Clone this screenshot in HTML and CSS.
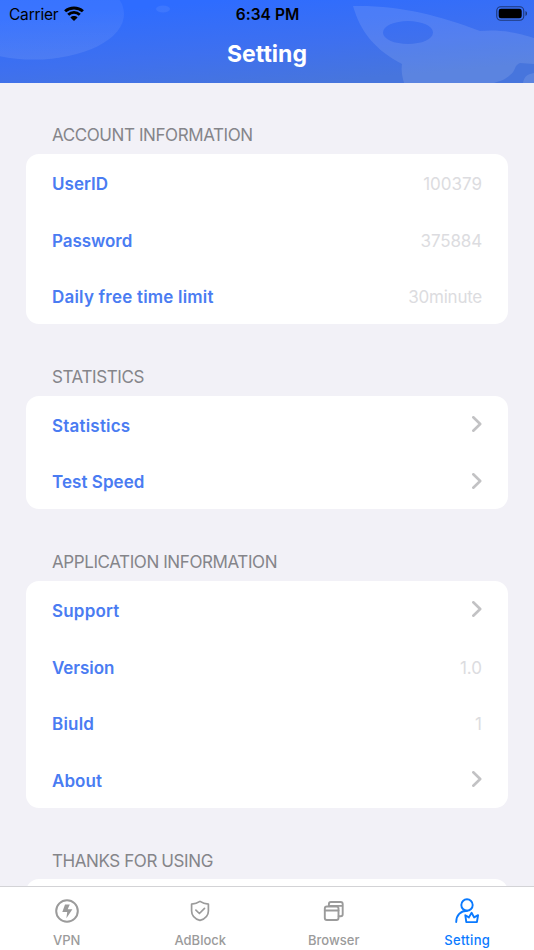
FILE: index.html
```html
<!DOCTYPE html>
<html lang="en">
<head>
<meta charset="utf-8">
<title>Setting</title>
<link rel="stylesheet" href="styles.css">
</head>
<body>
<div class="screen">
  <header class="top">
    <svg class="art" viewBox="0 0 534 83" aria-hidden="true">
      <defs>
        <linearGradient id="glow" x1="0" y1="0" x2="0" y2="1">
          <stop offset="0" stop-color="#fff" stop-opacity=".03"/>
          <stop offset="1" stop-color="#fff" stop-opacity=".09"/>
        </linearGradient>
      </defs>
      <ellipse cx="34" cy="14" rx="90" ry="45.5" fill="url(#glow)"/>
      <ellipse cx="163" cy="9" rx="7" ry="3.5" fill="#fff" opacity=".07"/>
      <path fill="#fff" fill-opacity=".11" fill-rule="evenodd" d="M353 6C399 5 438 15 480 31C501 29 520 33 534 38V64L520 63C514 65 516 71 510 75C505 80 500 81 494 83H404C402 76 401 70 402 64C375 50 360 31 353 6ZM383 32.500a25 11.500 0 1 0 50 0a25 11.500 0 1 0-50 0Z"/>
      <path fill="#fff" fill-opacity=".11" d="M523 83C524 76 528 74 534 73V83Z"/>
    </svg>
    <div class="status">
      <div class="carrier"><span>Carrier</span>
        <svg class="wifi" viewBox="0 0 20 15"><path d="M1.100 5.300C6 .8 14 .8 18.900 5.300M4.200 8.700c3.300-3.100 8.300-3.100 11.600 0" fill="none" stroke="#000" stroke-width="2.900"/><path d="M6.400 11.400c2-1.900 5.200-1.900 7.200 0L10 15Z"/></svg>
      </div>
      <div class="clock">6:34 PM</div>
      <svg class="battery" viewBox="0 0 32 15"><rect x=".75" y=".75" width="27" height="13.500" rx="4" fill="none" stroke="#000" stroke-opacity=".5" stroke-width="1.100"/><rect x="2.700" y="2.700" width="23" height="9.600" rx="2.300"/><path d="M29.500 5v5c2-.8 2-4.200 0-5Z" opacity=".55"/></svg>
    </div>
    <h1 class="title">Setting</h1>
  </header>
  <main class="content">
    <section class="group">
      <h2 class="heading">ACCOUNT INFORMATION</h2>
      <div class="card">
        <div class="row"><span class="label">UserID</span><span class="value">100379</span></div>
        <div class="row"><span class="label snug">Password</span><span class="value snug">375884</span></div>
        <div class="row"><span class="label loose">Daily free time limit</span><span class="value tight">30minute</span></div>
      </div>
    </section>
    <section class="group">
      <h2 class="heading">STATISTICS</h2>
      <div class="card">
        <div class="row"><span class="label loose">Statistics</span><svg class="chevron" viewBox="0 0 10 16"><path d="M1.300 1.300 8.200 8l-6.900 6.700"/></svg></div>
        <div class="row"><span class="label">Test Speed</span><svg class="chevron" viewBox="0 0 10 16"><path d="M1.300 1.300 8.200 8l-6.900 6.700"/></svg></div>
      </div>
    </section>
    <section class="group">
      <h2 class="heading">APPLICATION INFORMATION</h2>
      <div class="card">
        <div class="row"><span class="label loose">Support</span><svg class="chevron" viewBox="0 0 10 16"><path d="M1.300 1.300 8.200 8l-6.900 6.700"/></svg></div>
        <div class="row"><span class="label snug">Version</span><span class="value">1.0</span></div>
        <div class="row"><span class="label loose">Biuld</span><span class="value">1</span></div>
        <div class="row"><span class="label">About</span><svg class="chevron" viewBox="0 0 10 16"><path d="M1.300 1.300 8.200 8l-6.900 6.700"/></svg></div>
      </div>
    </section>
    <section class="group">
      <h2 class="heading">THANKS FOR USING</h2>
      <div class="card"><div class="row"></div></div>
    </section>
  </main>
  <nav class="tabs">
    <a class="tab">
      <svg class="icon" viewBox="0 0 28 28"><circle cx="14" cy="14" r="10.800" stroke-width="2"/><path class="solid" d="M12 7.500h4.800l-2.100 4.800h4.700l-6 8.900.8-6.200H9.300Z"/></svg>
      <span>VPN</span>
    </a>
    <a class="tab">
      <svg class="icon" viewBox="0 0 28 28"><path stroke-width="1.700" d="M14 4.400c2.500 1.700 5.400 2.600 8.400 2.800v6.700c0 4.400-3.200 7.800-8.400 9.500-5.200-1.700-8.400-5.100-8.400-9.500V7.200c3-.2 5.900-1.100 8.400-2.800ZM9.900 13.200l3.500 3.300 5.100-5.100"/></svg>
      <span>AdBlock</span>
    </a>
    <a class="tab">
      <svg class="icon" viewBox="0 0 28 28"><rect x="4.800" y="9.500" width="13.700" height="13.500" rx="2" stroke-width="1.900"/><path stroke-width="1.900" d="M4.800 13.500h13.700M8.900 9V7a2 2 0 0 1 2-2h9.800a2 2 0 0 1 2 2v10.300a2 2 0 0 1-2 2h-2M9 8.900h13.500"/></svg>
      <span>Browser</span>
    </a>
    <a class="tab active">
      <svg class="icon" viewBox="0 0 28 28"><circle cx="14" cy="8" r="5.700" stroke-width="1.900"/><path stroke-width="1.900" d="M3.200 25C3.200 18.500 7.600 13.800 14 13.800M12.300 18.200l3.600 2.200 2.700-4.700 2.500 4.700 4-2.200-1.200 6.900H13.300Z"/></svg>
      <span>Setting</span>
    </a>
  </nav>
</div>
</body>
</html>
```
FILE: styles.css
```css
* { box-sizing: border-box; }
body { margin: 0; font-family: Inter, "Liberation Sans", sans-serif; background: #f2f1f7; }
h1, h2 { margin: 0; }
.screen { height: 950px; display: flex; flex-direction: column; overflow: hidden; }
.top {
  position: relative; flex: none; height: 83px;
  background: linear-gradient(175deg, #2e6cff 15%, #3e70ef 55%, #4775dd 85%);
}
.art { position: absolute; inset: 0; width: 534px; height: 83px; }
.status {
  position: relative; height: 27px; padding: 1px 8px 0 9px;
  display: grid; grid-template-columns: 1fr auto 1fr; align-items: center;
  color: #000; font-size: 15.5px;
}
.carrier { display: flex; align-items: center; gap: 6px; letter-spacing: -.2px; }
.wifi { width: 20px; height: 15px; margin-top: -2px; }
.clock { font-weight: 600; letter-spacing: .05px; }
.battery { justify-self: end; width: 32px; height: 15px; margin: -2px -2px 0 0; }
.title {
  position: relative; height: 54px; text-align: center;
  color: #fff; font-size: 23px; line-height: 54px; font-weight: 700;
}
.content { flex: 1; min-height: 0; overflow: hidden; padding: 0 26px; }
.heading {
  height: 71.700px; padding: 42.800px 26px 0; color: #85858a;
  font-size: 17px; line-height: 20px; font-weight: 400; letter-spacing: -.41px;
}
.group:first-child .heading { height: 71.200px; padding-top: 42px; }
.card { border-radius: 13px; background: #fff; }
.row {
  height: 56.700px; padding: 3px 26px 0;
  display: flex; align-items: center; justify-content: space-between;
}
.label { color: #4a7cf2; font-size: 17px; font-weight: 600; letter-spacing: .05px; }
.label.loose { letter-spacing: .2px; }
.label.snug { letter-spacing: -.05px; }
.value { color: #dcdce0; font-size: 17px; }
.value.snug { letter-spacing: -.15px; }
.value.tight { letter-spacing: -.25px; }
.chevron { width: 10px; height: 16px; margin-top: -3px; fill: none; stroke: #c2c2c4; stroke-width: 2.600; stroke-linecap: round; stroke-linejoin: round; }
.tabs {
  flex: none; height: 64px; border-top: 1px solid #d3d3d6; background: #fff;
  display: grid; grid-template-columns: repeat(4, 1fr);
}
.tab {
  display: flex; flex-direction: column; align-items: center; padding-top: 10px;
  color: #9b9b9b; font-size: 13px; line-height: 16px; font-weight: 500;
}
.icon { width: 28px; height: 28px; margin-bottom: 7px; fill: none; stroke: currentColor; stroke-linejoin: round; stroke-linecap: round; }
.solid { fill: currentColor; stroke: none; }
.active { color: #0a7aff; letter-spacing: .3px; }
```
